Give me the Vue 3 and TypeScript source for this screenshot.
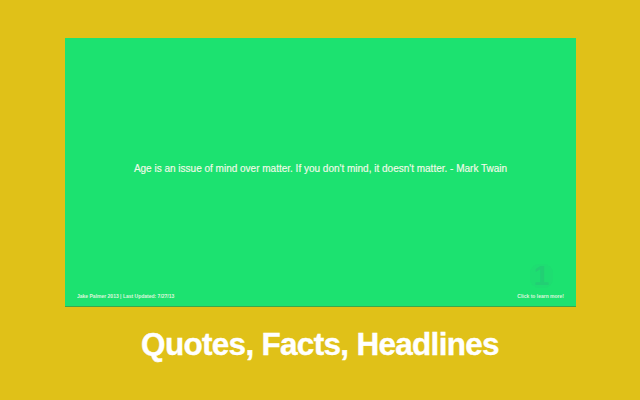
<script setup lang="ts">
const quote = "Age is an issue of mind over matter. If you don't mind, it doesn't matter. - Mark Twain";
</script>

<template>
  <div class="page">
    <section class="panel">
      <div class="quote-area"><p class="quote">{{ quote }}</p></div>
      <footer class="foot">
        <span class="credit">Jake Palmer 2013 | Last Updated: 7/27/13</span>
        <span class="more">Click to learn more!</span>
      </footer>
      <span class="badge">1</span>
    </section>
    <h1 class="caption">Quotes, Facts, Headlines</h1>
  </div>
</template>

<style scoped>
.page {
  width: 640px;
  height: 400px;
  box-sizing: border-box;
  padding-top: 38px;
  background: #e0c118;
  display: flex;
  flex-direction: column;
  align-items: center;
  overflow: hidden;
  font-family: "Liberation Sans", Arial, sans-serif;
}
.panel {
  position: relative;
  width: 511px;
  height: 269px;
  margin-left: 1px;
  box-sizing: border-box;
  background: #1ce270;
  border-bottom: 1px solid #3fa64a;
  display: flex;
  flex-direction: column;
  color: #f2fbe9;
}
.quote-area {
  flex: 1;
  display: flex;
  align-items: center;
  justify-content: center;
  padding-top: 6px;
}
.quote {
  margin: 0;
  font-size: 10px;
  white-space: nowrap;
  -webkit-text-stroke: 0.15px #f2fbe9;
}
.foot {
  display: flex;
  justify-content: space-between;
  align-items: flex-end;
  padding: 0 12px 7px 12px;
  font-size: 5px;
  font-weight: bold;
  line-height: 6px;
  opacity: 0.88;
}
.badge {
  position: absolute;
  right: 23px;
  bottom: 18px;
  width: 23px;
  height: 24px;
  border-radius: 9px;
  background: rgba(40, 190, 120, 0.14);
  color: rgba(40, 190, 120, 0.45);
  font-family: "Liberation Sans", sans-serif;
  font-size: 28px;
  line-height: 24px;
  text-align: center;
  font-weight: bold;
}
.caption {
  margin: 18px 0 0;
  color: #fff;
  font-size: 31.5px;
  letter-spacing: -0.7px;
  line-height: 38px;
  font-weight: bold;
  white-space: nowrap;
  -webkit-text-stroke: 0.4px #fff;
}
</style>
